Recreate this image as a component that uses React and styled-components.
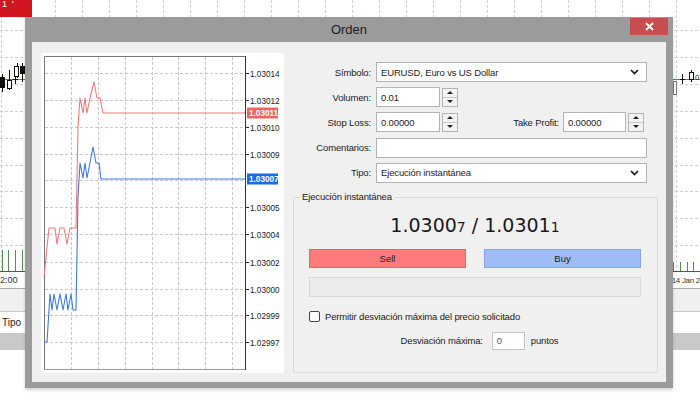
import React from "react";
import styled, { createGlobalStyle } from "styled-components";

const GlobalStyle = createGlobalStyle`
  html, body { margin: 0; padding: 0; background: #fff; }
  body {
    width: 700px; height: 399px; overflow: hidden;
    font-family: "Liberation Sans", Arial, sans-serif;
  }
  #root { width: 700px; height: 399px; }
  * { box-sizing: border-box; }
`;

const Screen = styled.div`
  position: relative;
  width: 700px;
  height: 399px;
  overflow: hidden;
  background: #fff;
  display: flex;
  flex-direction: column;
`;

const BgChart = styled.svg`
  display: block;
  flex: none;
`;

const OneClickTab = styled.div`
  position: absolute;
  left: 0;
  top: 0;
  width: 32px;
  height: 17px;
  background: #d0161f;
  color: #fff;
  font-size: 9px;
  line-height: 9px;
  padding: 0 0 0 2px;
  overflow: hidden;
  letter-spacing: 5px;
`;

const AxisRow = styled.div`
  height: 16px;
  flex: none;
  display: flex;
  align-items: center;
  font-size: 9px;
  color: #333;
  white-space: nowrap;
`;

const AxisLabelRight = styled.span`
  margin-left: auto;
  font-size: 8px;
  letter-spacing: -0.3px;
`;

const PanelStrip = styled.div`
  height: 24px;
  flex: none;
  background: #f0f0f0;
  border-top: 1px solid #a9a9a9;
  border-bottom: 1px solid #c9c9c9;
`;

const TableRow = styled.div`
  height: 21px;
  flex: none;
  font-size: 10px;
  line-height: 21px;
  padding-left: 2px;
  color: #222;
`;

const GreyBar = styled.div`
  height: 17px;
  flex: none;
  background: #c9c9c9;
`;

/* ---------- dialog ---------- */

const Dialog = styled.div`
  position: absolute;
  left: 25px;
  top: 17px;
  width: 648px;
  height: 371px;
  background: #9b9b9b;
  display: flex;
  flex-direction: column;
  box-shadow: 0 2px 3px rgba(0, 0, 0, 0.18);
`;

const TitleBar = styled.div`
  position: relative;
  height: 25px;
  flex: none;
  display: flex;
  align-items: center;
  justify-content: center;
  font-size: 13px;
  color: #1c1c1c;
`;

const CloseButton = styled.div`
  position: absolute;
  top: 1px;
  right: 5px;
  width: 38px;
  height: 17px;
  background: #c94d4d;
  display: flex;
  align-items: center;
  justify-content: center;
`;

const Body = styled.div`
  flex: 1;
  margin: 0 7px 6px;
  background: #f0f0f0;
  display: flex;
  gap: 9px;
  padding: 11px 8px 9px 9px;
`;

const ChartPanel = styled.div`
  width: 243px;
  flex: none;
  background: #fff;
`;

const RightCol = styled.div`
  width: 365px;
  flex: none;
  display: flex;
  flex-direction: column;
`;

const Form = styled.div`
  display: grid;
  grid-template-columns: 78px 1fr;
  grid-auto-rows: 20px;
  column-gap: 5px;
  row-gap: 5.2px;
  margin: 9px 11px 0 0;
`;

const Label = styled.span`
  align-self: center;
  text-align: right;
  font-size: 9.5px;
  color: #222;
  white-space: nowrap;
  letter-spacing: -0.15px;
  margin-left: ${(p) => (p.$push ? "auto" : "0")};
  margin-right: ${(p) => (p.$push ? "4px" : "0")};
`;

const FieldBox = styled.div`
  height: 20px;
  background: #fff;
  border: 1px solid #b3b3b3;
  padding: 0 7px 0 4px;
  display: flex;
  align-items: center;
  justify-content: space-between;
  font-size: 9.5px;
  color: #1e1e1e;
  letter-spacing: -0.15px;
`;

const TextInput = styled.input`
  width: ${(p) => p.$w || "100%"};
  height: 20px;
  background: #fff;
  border: 1px solid #b3b3b3;
  padding: 0 4px;
  margin: 0;
  font-family: "Liberation Sans", Arial, sans-serif;
  font-size: 9.5px;
  letter-spacing: -0.15px;
  color: #1e1e1e;
  outline: none;
  border-radius: 0;
`;

const FieldLine = styled.div`
  display: flex;
  align-items: center;
  padding-right: ${(p) => p.$pr || "0"};
`;

const NumberWrap = styled.div`
  display: flex;
  align-items: center;
  gap: 2px;
`;

const Spinner = styled.div`
  width: 16px;
  height: 19px;
  border: 1px solid #b3b3b3;
  background: #f3f3f3;
  display: flex;
  flex-direction: column;
`;

const SpinHalf = styled.div`
  flex: 1;
  display: flex;
  align-items: center;
  justify-content: center;
  border-top: ${(p) => (p.$down ? "1px solid #c6c6c6" : "none")};
  &::after {
    content: "";
    width: 0;
    height: 0;
    border-left: 3px solid transparent;
    border-right: 3px solid transparent;
    ${(p) =>
      p.$down
        ? "border-top: 3px solid #222;"
        : "border-bottom: 3px solid #222;"}
  }
`;

const Group = styled.div`
  position: relative;
  flex: 1;
  margin-top: 14px;
  border: 1px solid #d9d9d9;
  border-radius: 2px;
  padding: 16px 16px 0 15px;
  display: flex;
  flex-direction: column;
`;

const GroupTitle = styled.span`
  position: absolute;
  top: -7px;
  left: 6px;
  padding: 0 2px;
  background: #f0f0f0;
  font-size: 9.5px;
  line-height: 12px;
  letter-spacing: -0.15px;
  color: #222;
`;

const Price = styled.div`
  text-align: center;
  font-family: "DejaVu Sans", Verdana, sans-serif;
  font-size: 19px;
  line-height: 22px;
  color: #1a1a1a;
`;

const SmallDigit = styled.span`
  font-size: 14px;
`;

const ButtonRow = styled.div`
  display: grid;
  grid-template-columns: 1fr 1fr;
  column-gap: 18px;
  margin-top: 11px;
  height: 19px;
`;

const TradeButton = styled.div`
  display: flex;
  align-items: center;
  justify-content: center;
  font-size: 9.5px;
  color: #222;
  background: ${(p) => (p.$side === "sell" ? "#ff7c7c" : "#9ebcf6")};
  border: 1px solid ${(p) => (p.$side === "sell" ? "#de6a6a" : "#87a5de")};
`;

const StatusBox = styled.div`
  margin-top: 9px;
  height: 20px;
  background: #ebebeb;
  border: 1px solid #dadada;
`;

const CheckRow = styled.div`
  margin-top: 14px;
  display: flex;
  align-items: center;
  gap: 5px;
  font-size: 9.5px;
  letter-spacing: -0.15px;
  color: #222;
  height: 11px;
`;

const CheckBox = styled.span`
  width: 11px;
  height: 11px;
  border: 1px solid #444;
  border-radius: 2px;
  background: #fff;
  flex: none;
`;

const DevRow = styled.div`
  margin-top: 10px;
  display: flex;
  align-items: center;
  justify-content: center;
  padding-left: 9px;
  height: 18px;
  font-size: 9.5px;
  letter-spacing: -0.15px;
  color: #222;
`;

const DevInput = styled.input`
  width: 33px;
  height: 18px;
  margin: 0 6px 0 9px;
  padding: 0 4px;
  border: 1px solid #c4c4c4;
  background: #fff;
  font-family: "Liberation Sans", Arial, sans-serif;
  font-size: 9.5px;
  color: #555;
  outline: none;
  border-radius: 0;
`;

/* ---------- drawings ---------- */

function BackgroundChart() {
  const vx = Array.from({ length: 27 }, (_, i) => 1.5 + i * 27);
  const hy = Array.from({ length: 9 }, (_, i) => Math.round(30 + i * 26.9) + 0.5);
  return (
    <BgChart width="700" height="272" viewBox="0 0 700 272">
      {vx.map((x) => (
        <line key={"v" + x} x1={x} y1="0" x2={x} y2="271" stroke="#cfcfcf" strokeDasharray="3 2" />
      ))}
      {hy.map((y) => (
        <line key={"h" + y} x1="0" y1={y} x2="700" y2={y} stroke="#cfcfcf" strokeDasharray="3 2" />
      ))}
      <line x1="0" y1="79.5" x2="700" y2="79.5" stroke="#d94040" />
      {/* left candles */}
      <line x1="2.5" y1="74" x2="2.5" y2="92" stroke="#111" />
      <rect x="0" y="77" width="5" height="11" fill="#111" />
      <line x1="9.5" y1="70" x2="9.5" y2="90" stroke="#111" />
      <rect x="7.5" y="80.5" width="4" height="8" fill="#fff" stroke="#111" />
      <line x1="15.5" y1="74" x2="15.5" y2="84" stroke="#111" />
      <line x1="13" y1="79.5" x2="18" y2="79.5" stroke="#111" />
      <line x1="17.5" y1="63" x2="17.5" y2="78" stroke="#111" />
      <rect x="14.5" y="66.5" width="4" height="10" fill="#fff" stroke="#111" />
      <line x1="22.5" y1="63" x2="22.5" y2="82" stroke="#111" />
      <rect x="20" y="66" width="5" height="8" fill="#111" />
      {/* right candles */}
      <line x1="682.5" y1="74" x2="682.5" y2="84" stroke="#111" />
      <line x1="680" y1="79.5" x2="685" y2="79.5" stroke="#111" />
      <line x1="691.5" y1="70" x2="691.5" y2="82" stroke="#111" />
      <rect x="689.5" y="72.5" width="4" height="7" fill="#fff" stroke="#111" />
      <rect x="673.5" y="81.5" width="3" height="13" fill="#fff" stroke="#777" />
      <text x="695" y="80" fontSize="8" fill="#222" fontFamily="Liberation Sans, Arial, sans-serif">0</text>
      {/* volumes */}
      {[2.5, 8.5, 15.5, 22.5].map((x) => (
        <line key={"lv" + x} x1={x} y1="250" x2={x} y2="271" stroke="#5d8a5d" />
      ))}
      {[673.5, 680.5, 687.5, 693.5].map((x) => (
        <line key={"rv" + x} x1={x} y1="262" x2={x} y2="271" stroke="#4a9a4a" />
      ))}
      <line x1="0" y1="271.5" x2="700" y2="271.5" stroke="#555" />
    </BgChart>
  );
}

const CHART_FONT = "Liberation Sans, Arial, sans-serif";

function TickChart() {
  const hLines = [20, 47, 74, 101, 127, 154, 181, 209, 236, 262, 289];
  const vLines = [30, 57, 84, 111, 137, 164, 191];
  const labels = [
    ["1.03014", 20],
    ["1.03012", 47],
    ["1.03010", 74],
    ["1.03009", 101],
    ["1.03005", 154],
    ["1.03004", 181],
    ["1.03002", 209],
    ["1.03000", 236],
    ["1.02999", 262],
    ["1.02997", 289],
  ];
  const red =
    "3,224 8,175 14,175 16,191 19,175 23,175 26,191 29,175 34,175 35,175 37,74 39,45 42,60 44,45 46,60 49,45 53,29 56,45 59,45 62,60 204,60";
  const blue =
    "3,289 6,289 9,241 11,257 13,241 16,257 19,241 22,257 25,241 27,257 30,241 32,257 35,257 37,144 39,110 42,125 44,110 46,125 52,94 55,110 58,110 60,126 204,126";
  return (
    <svg width="243" height="320" viewBox="0 0 243 320" style={{ display: "block" }}>
      {vLines.map((x) => (
        <line key={"v" + x} x1={x + 0.5} y1="4" x2={x + 0.5} y2="316" stroke="#c9c9c9" strokeDasharray="3 2" />
      ))}
      {hLines.map((y) => (
        <line key={"h" + y} x1="4" y1={y + 0.5} x2="204" y2={y + 0.5} stroke="#c9c9c9" strokeDasharray="3 2" />
      ))}
      <path d="M3.5 316.5 V3.5 H204.5" fill="none" stroke="#777" />
      <line x1="3.5" y1="316.5" x2="204.5" y2="316.5" stroke="#9a9a9a" />
      <line x1="204.5" y1="3" x2="204.5" y2="317" stroke="#333" />
      {labels.map(([t, y]) => (
        <g key={t}>
          <line x1="204" y1={y + 0.5} x2="208" y2={y + 0.5} stroke="#333" />
          <text x="209" y={y + 3.5} fontSize="8.2" fill="#222" fontFamily={CHART_FONT}>
            {t}
          </text>
        </g>
      ))}
      <polyline points={red} fill="none" stroke="#f07a7a" strokeWidth="1.1" strokeLinejoin="round" />
      <polyline points={blue} fill="none" stroke="#3f7ae0" strokeWidth="1.1" strokeLinejoin="round" />
      <rect x="206" y="54.5" width="31" height="11" fill="#f06464" />
      <text x="208" y="63.2" fontSize="8.2" fontWeight="bold" fill="#fff" fontFamily={CHART_FONT}>
        1.03011
      </text>
      <rect x="206" y="120.5" width="31" height="11" fill="#1a6be6" />
      <text x="208" y="129.2" fontSize="8.2" fontWeight="bold" fill="#fff" fontFamily={CHART_FONT}>
        1.03007
      </text>
    </svg>
  );
}

function Chevron() {
  return (
    <svg width="9" height="6" viewBox="0 0 9 6">
      <path d="M1 1 L4.5 4.5 L8 1" fill="none" stroke="#1a1a1a" strokeWidth="1.7" />
    </svg>
  );
}

function CloseIcon() {
  return (
    <svg width="9" height="9" viewBox="0 0 9 9">
      <path d="M1 1 L8 8 M8 1 L1 8" stroke="#fff" strokeWidth="1.8" />
    </svg>
  );
}

function NumberField({ value, width }) {
  return (
    <NumberWrap>
      <TextInput $w={width} defaultValue={value} readOnly />
      <Spinner>
        <SpinHalf />
        <SpinHalf $down />
      </Spinner>
    </NumberWrap>
  );
}

export default function App() {
  return (
    <>
      <GlobalStyle />
      <Screen>
        <BackgroundChart />
        <AxisRow>
          <span>2:00</span>
          <AxisLabelRight>14 Jan 2</AxisLabelRight>
        </AxisRow>
        <PanelStrip />
        <TableRow>Tipo</TableRow>
        <GreyBar />
        <OneClickTab>1'</OneClickTab>

        <Dialog>
          <TitleBar>
            Orden
            <CloseButton>
              <CloseIcon />
            </CloseButton>
          </TitleBar>
          <Body>
            <ChartPanel>
              <TickChart />
            </ChartPanel>
            <RightCol>
              <Form>
                <Label>Símbolo:</Label>
                <FieldBox>
                  <span>EURUSD, Euro vs US Dollar</span>
                  <Chevron />
                </FieldBox>

                <Label>Volumen:</Label>
                <FieldLine>
                  <NumberField value="0.01" width="64px" />
                </FieldLine>

                <Label>Stop Loss:</Label>
                <FieldLine $pr="3px">
                  <NumberField value="0.00000" width="64px" />
                  <Label $push>Take Profit:</Label>
                  <NumberField value="0.00000" width="63px" />
                </FieldLine>

                <Label>Comentarios:</Label>
                <TextInput defaultValue="" readOnly />

                <Label>Tipo:</Label>
                <FieldBox>
                  <span>Ejecución instantánea</span>
                  <Chevron />
                </FieldBox>
              </Form>

              <Group>
                <GroupTitle>Ejecución instantánea</GroupTitle>
                <Price>
                  1.0300<SmallDigit>7</SmallDigit> / 1.0301<SmallDigit>1</SmallDigit>
                </Price>
                <ButtonRow>
                  <TradeButton $side="sell">Sell</TradeButton>
                  <TradeButton $side="buy">Buy</TradeButton>
                </ButtonRow>
                <StatusBox />
                <CheckRow>
                  <CheckBox />
                  Permitir desviación máxima del precio solicitado
                </CheckRow>
                <DevRow>
                  Desviación máxima:
                  <DevInput defaultValue="0" readOnly />
                  puntos
                </DevRow>
              </Group>
            </RightCol>
          </Body>
        </Dialog>
      </Screen>
    </>
  );
}
